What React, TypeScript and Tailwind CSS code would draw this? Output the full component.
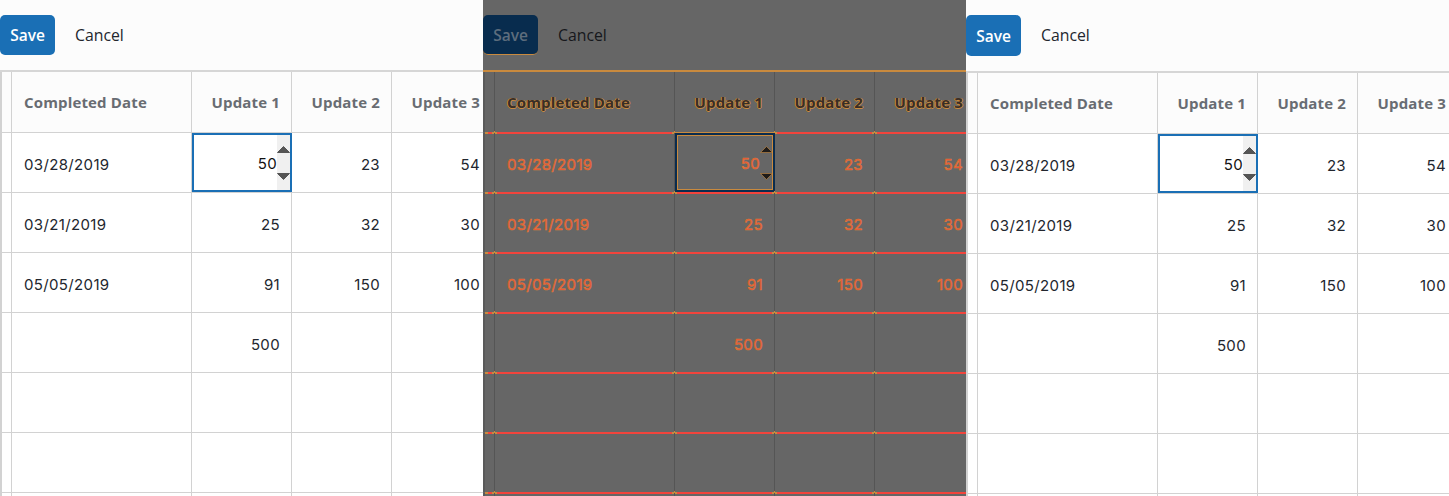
const ORANGE = "#c98a3e";
const HEAD = ["", "Completed Date", "Update 1", "Update 2", "Update 3"];
const ROWS = [
  ["", "03/28/2019", "50", "23", "54"],
  ["", "03/21/2019", "25", "32", "30"],
  ["", "05/05/2019", "91", "150", "100"],
  ["", "", "500", "", ""],
  ["", "", "", "", ""],
  ["", "", "", "", ""],
  ["", "", "", "", ""],
];

const bodyText = "font-['Inter',sans-serif] text-[15px] tracking-[0.35px] whitespace-nowrap";
const diffBody = " font-normal text-[#f04a38] [-webkit-text-stroke:0.5px_#d8843a]";

function Arrow({ down, diff }: { down?: boolean; diff: boolean }) {
  return (
    <svg width="13" height="7" viewBox="0 0 13 7" className="block">
      <path
        d={down ? "M0.5 0.5H12.5L6.5 6.5Z" : "M6.5 0.5L12.5 6.5H0.5Z"}
        fill={diff ? "#1f1c1a" : "#555555"}
        stroke={diff ? ORANGE : "#555555"}
        strokeWidth={diff ? 0.6 : 1}
      />
    </svg>
  );
}

function Spinner({ value, diff }: { value: string; diff: boolean }) {
  return (
    <div
      className={
        diff
          ? "relative flex h-[59px] items-center justify-end border-2 border-[#0a2c4e] outline outline-1 -outline-offset-3 outline-[#c98a3e]"
          : "flex h-[59px] items-center justify-end border-2 border-[#1a6fb5] bg-white"
      }
    >
      <span className={bodyText + " pt-[3px] " + (diff ? diffBody : "text-[#111111]")}>{value}</span>
      <div
        className={
          "flex h-full w-[13px] flex-col items-center justify-between pt-[11px] pb-[10px]" + (diff ? "" : " bg-[#f0f0f0]")
        }
      >
        <Arrow diff={diff} />
        <Arrow down diff={diff} />
      </div>
    </div>
  );
}

function Marks() {
  return (
    <>
      <span className="absolute -bottom-0 -left-[3px] h-[2px] w-[5px] bg-[#c98a3e]" />
      <span className="absolute -bottom-px -left-[1px] h-[4px] w-[1px] bg-[#c98a3e]" />
    </>
  );
}

function Cell({
  c,
  header,
  diff,
  children,
}: {
  c: number;
  header?: boolean;
  diff: boolean;
  children?: React.ReactNode;
}) {
  const border = diff
    ? "border-r border-r-[#555555] " + (c === 0 ? "border-l-2 border-l-[#5a5a5a] " : "")
    : "border-r border-r-[#d2d2d2] " + (c === 0 ? "border-l-2 border-l-[#d2d2d2] " : "");
  return (
    <div
      className={
        "relative flex items-center " +
        (header ? "h-[60px] " : "h-[59px] ") +
        (c === 0 ? "" : c === 1 ? "pl-3 " : "justify-end pr-[11px] ") +
        (!diff && header ? "bg-[#fcfcfc] " : "") +
        border
      }
    >
      {children}
    </div>
  );
}

function Line({ diff, focus }: { diff: boolean; focus?: boolean }) {
  return (
    <div className={"grid h-px grid-cols-[12px_180px_100px_100px_100px] " + (diff ? "relative" : "bg-[#d2d2d2]")}>
      {diff &&
        [0, 1, 2, 3, 4].map((c) => (
          <div
            key={c}
            className={
              "relative h-[2px] " +
              (c === 0 ? "ml-[2px] " : "") +
              (focus && c === 2 ? "bg-[#c98a3e]" : "bg-[#f2443c]")
            }
          >
            {c > 0 && <Marks />}
            {c === 0 && <span className="absolute top-0 left-0 h-[2px] w-[3px] bg-[#c98a3e]" />}
          </div>
        ))}
    </div>
  );
}

function Panel({ diff, shift }: { diff?: boolean; shift?: boolean }) {
  const d = !!diff;
  return (
    <div className={"h-[496px] w-[483px] shrink-0 overflow-hidden " + (d ? "bg-[#666666]" : "bg-white")}>
      <div className={(shift ? "h-[71px] " : "h-[70px] ") + "flex items-start pt-[15px] " + (d ? "" : "bg-[#fcfcfc]")}>
        <button
          className={
            (shift ? "h-[41px] " : "h-[40px] ") +
            "w-[55px] rounded-[5px] pt-[2px] font-['Open_Sans',sans-serif] text-[15.5px] font-semibold " +
            (d ? "border-b border-[#c98a3e] bg-[#082c4e] text-[#5d6d7d]" : "bg-[#1a6fb5] text-white")
          }
        >
          Save
        </button>
        <span
          className={
            "ml-5 flex h-[40px] items-center pt-[2px] font-['Open_Sans',sans-serif] text-[15.8px] " +
            (d ? "text-[#16181c]" : "text-[#22262e]")
          }
        >
          Cancel
        </span>
      </div>
      <div className={d ? "h-[2px] bg-[#c98a3e]" : "h-[2px] bg-[#d6d6d6]"} />
      <div className="w-[492px]">
        <div className="grid grid-cols-[12px_180px_100px_100px_100px]">
          {HEAD.map((h, c) => (
            <Cell key={c} c={c} header diff={d}>
              <span
                className={
                  "font-['Open_Sans',sans-serif] text-[15px] font-bold tracking-[0.15px] whitespace-nowrap " +
                  (d
                    ? "text-[#3a2e26] [text-shadow:1px_0_0_#c98a3e,-1px_0_0_#c98a3e,0_1px_0_#c98a3e]"
                    : "text-[#686c72]")
                }
              >
                {h}
              </span>
            </Cell>
          ))}
        </div>
        {ROWS.map((r, i) => (
          <div key={i}>
            <Line diff={d} focus={i === 0} />
            <div className="grid grid-cols-[12px_180px_100px_100px_100px]">
              {r.map((v, c) =>
                i === 0 && c === 2 ? (
                  <Spinner key={c} value={v} diff={d} />
                ) : (
                  <Cell key={c} c={c} diff={d}>
                    <span className={bodyText + " pt-[6px] " + (d ? diffBody : "text-[#22262e]")}>{v}</span>
                  </Cell>
                )
              )}
            </div>
          </div>
        ))}
      </div>
    </div>
  );
}

export default function App() {
  return (
    <div className="flex h-[496px] w-[1449px] overflow-hidden">
      <Panel />
      <Panel diff />
      <Panel shift />
    </div>
  );
}
